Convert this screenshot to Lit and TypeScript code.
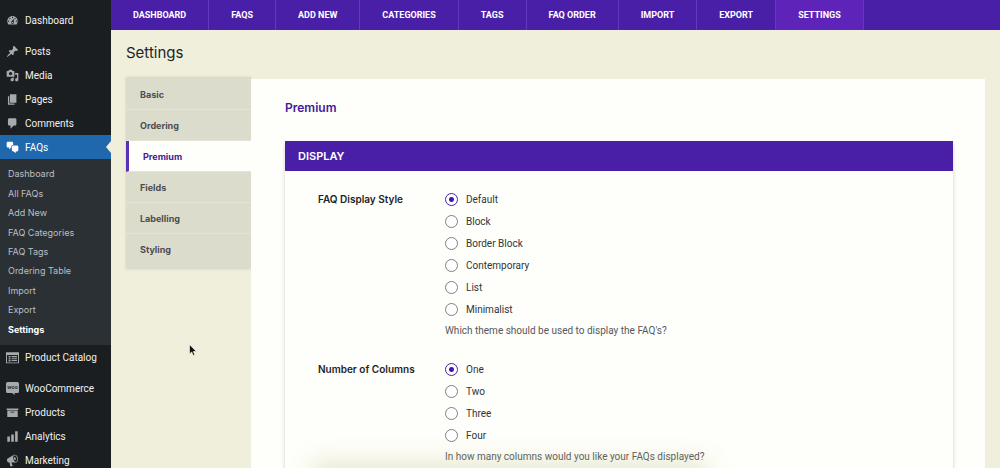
import { LitElement, html, css, svg, nothing } from "lit";
import { customElement, state } from "lit/decorators.js";

const icons: Record<string, unknown> = {
  dashboard: svg`<path fill-rule="evenodd" d="M3.76 16h12.48c1.1-1.37 1.76-3.11 1.76-5 0-4.42-3.58-8-8-8s-8 3.58-8 8c0 1.89.66 3.63 1.76 5zM10 4c.55 0 1 .45 1 1s-.45 1-1 1-1-.45-1-1 .45-1 1-1zM6 6c.55 0 1 .45 1 1s-.45 1-1 1-1-.45-1-1 .45-1 1-1zm8 0c.55 0 1 .45 1 1s-.45 1-1 1-1-.45-1-1 .45-1 1-1zm-5.37 5.55L12 7v6c0 1.1-.9 2-2 2s-2-.9-2-2c0-.57.24-1.08.63-1.45zM4 10c.55 0 1 .45 1 1s-.45 1-1 1-1-.45-1-1 .45-1 1-1zm12 0c.55 0 1 .45 1 1s-.45 1-1 1-1-.45-1-1 .45-1 1-1zm-5 3c0-.55-.45-1-1-1s-1 .45-1 1 .45 1 1 1 1-.45 1-1z"/>`,
  pin: svg`<path d="M10.44 3.02l1.82-1.82 6.36 6.35-1.83 1.82c-1.05-.68-2.48-.57-3.41.36l-.75.75c-.92.93-1.04 2.35-.35 3.41l-1.83 1.82-2.41-2.41-2.8 2.79c-.42.42-3.38 2.71-3.8 2.29s1.86-3.39 2.28-3.81l2.79-2.79L4.1 9.36l1.83-1.82c1.05.69 2.48.57 3.4-.36l.75-.75c.93-.92 1.05-2.35.36-3.41z"/>`,
  media: svg`<path fill-rule="evenodd" d="M13 11V4c0-.55-.45-1-1-1h-1.67L9 1H5L3.67 3H2c-.55 0-1 .45-1 1v7c0 .55.45 1 1 1h10c.55 0 1-.45 1-1zM7 4.5c1.38 0 2.5 1.12 2.5 2.5S8.38 9.5 7 9.5 4.5 8.38 4.5 7 5.62 4.5 7 4.5zM14 6h5v10.5c0 1.38-1.12 2.5-2.5 2.5S14 17.88 14 16.5s1.12-2.5 2.5-2.5c.17 0 .34.02.5.05V9h-3V6zm-4 8.05V13h2v3.5c0 1.38-1.12 2.5-2.5 2.5S7 17.88 7 16.5 8.12 14 9.5 14c.17 0 .34.02.5.05z"/>`,
  pages: svg`<path d="M6 15V2h10v13H6zm-1 1h8v2H3V5h2v11z"/>`,
  comment: svg`<path d="M5 2h9c1.1 0 2 .9 2 2v7c0 1.1-.9 2-2 2h-2l-5 5v-5H5c-1.1 0-2-.9-2-2V4c0-1.1.9-2 2-2z"/>`,
  chat: svg`<path d="M11 6h-.82C9.07 6 8 7.2 8 8.16V10l-3 3v-3H3c-1.1 0-2-.9-2-2V3c0-1.1.9-2 2-2h6c1.1 0 2 .9 2 2v3zm0 1h6c1.1 0 2 .9 2 2v5c0 1.1-.9 2-2 2h-2v3l-3-3h-1c-1.1 0-2-.9-2-2V9c0-1.1.9-2 2-2z"/>`,
  list: svg`<path fill-rule="evenodd" d="M0 2h20v17H0V2zm1.500 4v11.500h17V6h-17zM4 7.500h3v2.500H4V7.500zm4.500 0H17v2H8.500v-2zM4 11h3v2H4v-2zm4.500 0H17v1.500H8.500V11zM4 14h3v2H4v-2zm4.500 0H17v1.500H8.500V14z"/>`,
  woo: svg`<path d="M2.500 0h15A2.500 2.500 0 0 1 20 2.500v12a2.500 2.500 0 0 1-2.500 2.500H13l1 3-5-3H2.500A2.500 2.500 0 0 1 0 14.500v-12A2.500 2.500 0 0 1 2.500 0z"/><text class="woo" x="10" y="11" text-anchor="middle">woo</text>`,
  archive: svg`<path fill-rule="evenodd" d="M19 4v2H1V4h18zM2 7h16v10H2V7zm11 3V9H7v1h6z"/>`,
  bars: svg`<path d="M18 18V2h-4v16h4zm-6 0V7H8v11h4zm-6 0v-8H2v8h4z"/>`,
  megaphone: svg`<path fill-rule="evenodd" d="M18.150 5.940c.46 1.620.38 3.220-.02 4.480-.42 1.280-1.260 2.180-2.300 2.480-.16.06-.26.06-.4.06-.06.02-.12.02-.18.02-.06.02-.14.02-.22.02h-6.800l2.220 5.500c.02.14-.06.26-.14.34-.08.1-.24.16-.34.16H6.950c-.1 0-.26-.06-.34-.16-.08-.08-.16-.2-.14-.34l-1-5.500H4.250l-.02-.02c-.5.06-1.080-.18-1.540-.62s-.88-1.080-1.060-1.880c-.24-.8-.2-1.560-.02-2.200.18-.62.58-1.080 1.060-1.300l.02-.02 9-5.400c.1-.06.18-.1.24-.16.06-.04.14-.08.24-.12.16-.08.28-.12.5-.18 1.040-.3 2.240.1 3.220.98s1.840 2.240 2.260 3.860zm-2.580 5.980h-.02c.4-.1.74-.34 1.040-.7.58-.7.86-1.760.86-3.040 0-.64-.1-1.300-.28-1.980-.34-1.360-1.020-2.500-1.780-3.240s-1.680-1.100-2.460-.88c-.82.22-1.400.96-1.700 2-.32 1.040-.28 2.360.06 3.720.38 1.360 1 2.500 1.800 3.240.78.74 1.620 1.100 2.480.88zm-2.540-7.080c.22-.04.42-.02.62.04.38.16.76.48 1.020 1s.42 1.200.42 1.780c0 .3-.04.56-.12.8-.18.48-.44.84-.86.94-.34.1-.8-.06-1.140-.4s-.64-.86-.78-1.500c-.18-.62-.12-1.240.02-1.720s.48-.84.82-.94z"/>`,
};

interface MenuItem {
  label: string;
  icon: string;
  children?: string[];
}

const menuGroups: MenuItem[][] = [
  [{ label: "Dashboard", icon: "dashboard" }],
  [
    { label: "Posts", icon: "pin" },
    { label: "Media", icon: "media" },
    { label: "Pages", icon: "pages" },
    { label: "Comments", icon: "comment" },
    {
      label: "FAQs",
      icon: "chat",
      children: ["Dashboard", "All FAQs", "Add New", "FAQ Categories", "FAQ Tags", "Ordering Table", "Import", "Export", "Settings"],
    },
    { label: "Product Catalog", icon: "list" },
  ],
  [
    { label: "WooCommerce", icon: "woo" },
    { label: "Products", icon: "archive" },
    { label: "Analytics", icon: "bars" },
    { label: "Marketing", icon: "megaphone" },
  ],
];

@customElement("admin-menu")
export class AdminMenu extends LitElement {
  static styles = css`
    :host { display: block; background: #1b1e20; color: #f0f0f1; }
    nav { display: flex; flex-direction: column; gap: 7px; padding-top: 8px; }
    ul { list-style: none; margin: 0; padding: 0; }
    a { color: inherit; text-decoration: none; }
    .item { display: flex; align-items: center; gap: 6px; height: 24px; padding-left: 6px; font: 400 10px "Roboto", sans-serif; white-space: nowrap; }
    .item svg { width: 13px; height: 13px; fill: #a7aaad; flex: none; }
    .current { position: relative; background: #2068ae; color: #fff; }
    .current svg { fill: #fff; }
    .current::after { content: ""; position: absolute; right: 0; top: 6px; border: 6px solid transparent; border-left-width: 0; border-right: 5px solid #efefdc; }
    .sub { display: grid; grid-auto-rows: 1fr; height: 175px; padding: 5px 0 6px; background: #2b3035; color: #bcbfc2; font-size: 9px; }
    .sub li { display: flex; align-items: center; padding-left: 8px; }
    .selected { color: #fff; font-weight: 700; }
    .woo { font: 700 8px "Inter", sans-serif; fill: #303438; }
  `;

  render() {
    return html`<nav aria-label="Main menu">
      ${menuGroups.map(
        (group) => html`<ul>
          ${group.map(
            (item) => html`<li>
              <a href="#" class="item ${item.children ? "current" : ""}">
                <svg viewBox="0 0 20 20" aria-hidden="true">${icons[item.icon]}</svg>${item.label}
              </a>
              ${item.children
                ? html`<ul class="sub">
                    ${item.children.map((c) => html`<li><a href="#" class=${c === "Settings" ? "selected" : ""}>${c}</a></li>`)}
                  </ul>`
                : nothing}
            </li>`
          )}
        </ul>`
      )}
    </nav>`;
  }
}

interface Field {
  name: string;
  label: string;
  options: string[];
  help: string;
}

const fields: Field[] = [
  {
    name: "style",
    label: "FAQ Display Style",
    options: ["Default", "Block", "Border Block", "Contemporary", "List", "Minimalist"],
    help: "Which theme should be used to display the FAQ's?",
  },
  {
    name: "columns",
    label: "Number of Columns",
    options: ["One", "Two", "Three", "Four"],
    help: "In how many columns would you like your FAQs displayed?",
  },
];

@customElement("radio-field")
export class RadioField extends LitElement {
  static properties = { field: { attribute: false } };
  declare field: Field;

  static styles = css`
    :host { display: block; }
    .row { display: grid; grid-template-columns: 127px 1fr; align-items: start; }
    .title { font-size: 10px; font-weight: 600; line-height: 22px; color: #1d2327; }
    .option { display: flex; align-items: center; gap: 8px; height: 22px; font: 400 10px "Roboto", sans-serif; color: #303438; }
    input { appearance: none; box-sizing: border-box; width: 13px; height: 13px; margin: 0; border: 1px solid #7d8086; border-radius: 50%; background: #fff; }
    input:checked { border-color: #4a20a8; background: radial-gradient(circle, #4318a4 0 2px, #4318a4 2px, #fff 3px); }
    .help { margin: 0; font: 400 10px/22px "Roboto", sans-serif; color: #55585c; }
  `;

  render() {
    const f = this.field;
    return html`<div class="row" role="radiogroup" aria-labelledby="title">
      <div class="title" id="title">${f.label}</div>
      <div>
        ${f.options.map(
          (o, i) => html`<label class="option"><input type="radio" name=${f.name} .checked=${i === 0} />${o}</label>`
        )}
        <p class="help">${f.help}</p>
      </div>
    </div>`;
  }
}

@customElement("app-root")
export class AppRoot extends LitElement {
  @state() private tab = "Premium";

  static styles = css`
    :host {
      position: relative;
      display: grid;
      grid-template-columns: 111px 1fr;
      height: 100vh;
      overflow: hidden;
      background: #efefdc;
      font-family: "Inter", "Roboto", sans-serif;
    }
    .main { min-width: 0; display: flex; flex-direction: column; }
    .topnav { display: flex; height: 30px; flex: none; background: #4a1fa8; }
    .topnav a { display: flex; align-items: center; padding: 0 22px; border-right: 1px solid #6238bf; color: #fff; font: 700 9px "Roboto", sans-serif; text-decoration: none; white-space: nowrap; }
    .topnav .on { background: #5e24ba; }
    h1 { margin: 0; padding: 12px 15px 0; font-size: 15px; font-weight: 400; line-height: 22px; color: #1d2327; }
    .body { flex: 1; display: grid; grid-template-columns: 125px 1fr; align-items: start; padding: 13px 15px 0; }
    .tabs { display: flex; flex-direction: column; padding: 2px 0 4px; background: #dcdccd; box-shadow: 0 0 2px 1px #e0e0d0; border-radius: 2px; }
    .tabs button { height: 31px; margin: 0; padding: 0 14px; border: 0; border-bottom: 1px solid #e3e3d6; background: none; color: #4b4d50; font: 700 9px "Inter", sans-serif; text-align: left; }
    .tabs button:last-child { border-bottom-color: transparent; }
    .tabs .on { border-left: 3px solid #5a30b4; background: #fefefa; color: #43199c; }
    .panel { position: relative; min-height: 100vh; padding: 18px 32px 0 34px; margin-top: 2px; background: #fefefa; }
    h2 { margin: 0; font-size: 12px; font-weight: 600; line-height: 22px; color: #43199c; }
    h3 { margin: 0; padding-left: 13px; font-size: 11px; font-weight: 600; line-height: 30px; color: #fff; background: #4a1fa8; }
    .section { margin-top: 22px; box-shadow: 0 3px 4px #cfcfd0; background: #fefefa; }
    .fields { display: flex; flex-direction: column; gap: 16px; padding: 17px 33px 60px; }
    .shade { position: absolute; left: 320px; right: 300px; bottom: -12px; height: 12px; box-shadow: 0 0 22px 6px rgba(190, 190, 120, 0.35); }
    .pointer { position: absolute; left: 189px; top: 344px; width: 8px; height: 12px; }
  `;

  render() {
    const links = ["DASHBOARD", "FAQS", "ADD NEW", "CATEGORIES", "TAGS", "FAQ ORDER", "IMPORT", "EXPORT", "SETTINGS"];
    const tabs = ["Basic", "Ordering", "Premium", "Fields", "Labelling", "Styling"];
    return html`
      <admin-menu></admin-menu>
      <div class="main">
        <nav class="topnav" aria-label="FAQ sections">
          ${links.map((l) => html`<a href="#" class=${l === "SETTINGS" ? "on" : ""}>${l}</a>`)}
        </nav>
        <h1>Settings</h1>
        <div class="body">
          <div class="tabs">
            ${tabs.map((t) => html`<button type="button" class=${t === this.tab ? "on" : ""} @click=${() => (this.tab = t)}>${t}</button>`)}
          </div>
          <main class="panel">
            <h2>${this.tab}</h2>
            <section class="section">
              <h3>DISPLAY</h3>
              <div class="fields">${fields.map((f) => html`<radio-field .field=${f}></radio-field>`)}</div>
            </section>
          </main>
        </div>
      </div>
      <div class="shade"></div>
      <svg class="pointer" viewBox="0 0 8 12" aria-hidden="true">
        <path d="M.5.5v9.500l2.200-2 1.500 3.500 1.600-.7-1.500-3.300h3z" fill="#111" stroke="#fff" stroke-width=".6" />
      </svg>
    `;
  }
}
